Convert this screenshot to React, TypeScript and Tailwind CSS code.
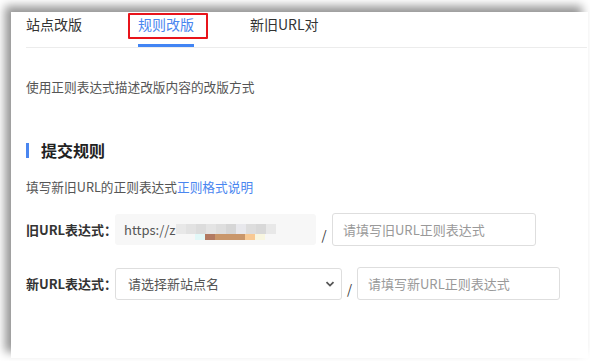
import React from "react";

const tabs = ["站点改版", "规则改版", "新旧URL对"];

// blurred part of the old url, drawn as mosaic blocks
const grayBlocks = ["#e8e8e8", "#e2e2e2", "#dcdcdc", "#e4e4e4", "#dedede", "#d6d6d6", "#e8e8ec", "#dddddd", "#d8d8d8", "#e8e8e8"];
const colorBlocks = ["#e2f8f8", "#b27a62", "#c9966a", "#c9966a", "#c9966a", "#f8c993", "#f8f6e0"];

const App = () => {
  const active = 1;

  return (
    <div
      className="w-[590px] h-[361px] bg-white pl-[11px] pt-[12px] overflow-hidden"
      style={{ fontFamily: '"Noto Sans CJK SC", "Noto Sans", sans-serif' }}
    >
      <div className="w-[577px] h-[346px] bg-white pl-[15px] pr-[1px] shadow-[-6px_-6px_9px_rgba(0,0,0,0.42)]">
        {/* tabs */}
        <div className="flex h-[36px] border-b border-[#ececec]">
          {tabs.map((tab, i) => (
            <div key={tab} className="relative mr-[56px] h-[35px]">
              <span
                className={
                  "block text-[14px] leading-[24px] " +
                  (i === active ? "text-[#4a86f0]" : "text-[#333]")
                }
              >
                {tab}
              </span>
              {i === active && (
                <>
                  <div className="absolute left-0 right-0 bottom-[0px] h-[3px] bg-[#4285f4]" />
                  <div className="absolute left-[-10px] top-[1px] w-[80px] h-[26px] border-2 border-[#e8141b] rounded-[1px]" />
                </>
              )}
            </div>
          ))}
        </div>

        <p className="mt-[29px] text-[12.7px] leading-[20px] text-[#555]">
          使用正则表达式描述改版内容的改版方式
        </p>

        <div className="mt-[41px] flex items-center h-[24px]">
          <div className="w-[3px] h-[15px] bg-[#4a86f0]" />
          <h2 className="ml-[12px] text-[16px] font-bold leading-[24px] text-[#222]">提交规则</h2>
        </div>

        <p className="mt-[15px] text-[12.7px] leading-[20px] text-[#555]">
          填写新旧URL的正则表达式<span className="text-[#4a86f0]">正则格式说明</span>
        </p>

        {/* old url row */}
        <div className="mt-[16px] flex items-center h-[33px]">
          <label className="w-[89px] whitespace-nowrap text-[13px] font-bold text-[#333]">旧URL表达式：</label>
          <div className="w-[201px] h-[31px] rounded-[3px] bg-[#f7f7f7] flex items-center pl-[9px]">
            <span className="text-[13px] text-[#555] leading-[16px]">https://z</span>
            <div className="flex flex-col mt-[4px]">
              <div className="flex">
                {grayBlocks.map((c, i) => (
                  <div key={i} className="w-[10px] h-[10px]" style={{ background: c }} />
                ))}
              </div>
              <div className="flex ml-[19px]">
                {colorBlocks.map((c, i) => (
                  <div key={i} className="w-[10px] h-[6px]" style={{ background: c }} />
                ))}
              </div>
            </div>
          </div>
          <span className="w-[16px] text-center mt-[10px] text-[13px] text-[#333]">/</span>
          <input
            className="w-[204px] h-[33px] rounded-[3px] border border-[#dedede] px-[10px] text-[13px] outline-none placeholder:text-[#999]"
            placeholder="请填写旧URL正则表达式"
          />
        </div>

        {/* new url row */}
        <div className="mt-[21px] flex items-center h-[33px]">
          <label className="w-[89px] whitespace-nowrap text-[13px] font-bold text-[#333]">新URL表达式：</label>
          <div className="w-[227px] h-[32px] rounded-[3px] border border-[#dedede] flex items-center justify-between pl-[12px] pr-[6px]">
            <span className="text-[13px] text-[#555]">请选择新站点名</span>
            <svg width="10" height="10" viewBox="0 0 10 10">
              <path d="M1.5 3.2 L5 6.6 L8.5 3.2" fill="none" stroke="#555" strokeWidth="1.8" />
            </svg>
          </div>
          <span className="w-[15px] text-center mt-[10px] text-[13px] text-[#333]">/</span>
          <input
            className="w-[203px] h-[33px] rounded-[3px] border border-[#dedede] px-[10px] text-[13px] outline-none placeholder:text-[#999]"
            placeholder="请填写新URL正则表达式"
          />
        </div>
      </div>
    </div>
  );
};

export default App;
